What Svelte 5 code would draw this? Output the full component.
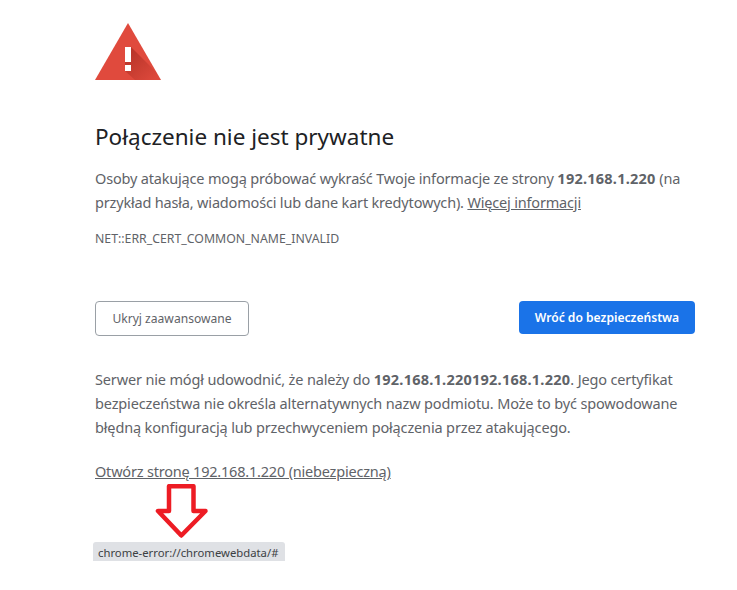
<script>
  const ip = '192.168.1.220';
</script>

<div class="page">
  <main class="interstitial">
    <svg class="warn" width="66" height="57" viewBox="0 0 66 57" aria-hidden="true">
      <defs>
        <linearGradient id="shade" x1="0.1" y1="0.1" x2="0.9" y2="0.9">
          <stop offset="0" stop-color="#a52a20" stop-opacity="0.7" />
          <stop offset="1" stop-color="#a52a20" stop-opacity="0.05" />
        </linearGradient>
      </defs>
      <path d="M33 0 L66 57 L0 57 Z" fill="#e04a3d" />
      <path d="M36 24 L62 50 L66 57 L40 57 L30 48 L30 39 Z" fill="url(#shade)" />
      <rect x="30" y="24" width="6" height="15" fill="#fff" />
      <rect x="30" y="42" width="6" height="6" fill="#fff" />
    </svg>

    <h1>Połączenie nie jest prywatne</h1>
    <p class="msg">
      Osoby atakujące mogą próbować wykraść Twoje informacje ze strony <strong>{ip}</strong> (na
      przykład hasła, wiadomości lub dane kart kredytowych). <a href="#more">Więcej informacji</a>
    </p>
    <div class="code">NET::ERR_CERT_COMMON_NAME_INVALID</div>

    <div class="actions">
      <button class="secondary">Ukryj zaawansowane</button>
      <button class="primary">Wróć do bezpieczeństwa</button>
    </div>

    <p class="details">
      Serwer nie mógł udowodnić, że należy do <strong>{ip}{ip}</strong>. Jego certyfikat
      bezpieczeństwa nie określa alternatywnych nazw podmiotu. Może to być spowodowane
      błędną konfiguracją lub przechwyceniem połączenia przez atakującego.
    </p>
    <a class="proceed" href="#go">Otwórz stronę {ip} (niebezpieczną)</a>
  </main>

  <svg class="arrow" width="54" height="56" viewBox="0 0 54 56" aria-hidden="true">
    <path d="M15 2.2 H39.5 V27 H51.5 L27.3 51.5 L4 27 H15 Z" fill="#fff" stroke="#ed1c24" stroke-width="4.5" stroke-linejoin="round" />
  </svg>
  <div class="status">chrome-error://chromewebdata/#</div>
</div>

<style>
  :global(body) {
    margin: 0;
    background: #fff;
  }
  .page {
    position: relative;
    width: 737px;
    height: 590px;
    overflow: hidden;
    font-family: "Noto Sans", "Open Sans", sans-serif;
    color: #5f6368;
  }
  .interstitial {
    width: 600px;
    padding: 23px 0 0 95px;
  }
  .warn {
    display: block;
  }
  h1 {
    margin: 41px 0 0;
    font-size: 22.5px;
    font-weight: 400;
    line-height: 32px;
    color: #202124;
  }
  .msg {
    margin: 13px 0 0;
    font-size: 14.5px;
    letter-spacing: -0.18px;
    line-height: 24px;
  }
  .msg strong,
  .details strong {
    font-weight: 700;
    letter-spacing: 0.24px;
  }
  a {
    color: #5f6368;
    text-decoration: underline;
  }
  .code {
    margin-top: 17px;
    font-size: 12.3px;
    line-height: 16px;
    text-transform: uppercase;
  }
  .actions {
    display: flex;
    justify-content: space-between;
    align-items: flex-start;
    margin-top: 54px;
  }
  button {
    border-radius: 4px;
    font-family: inherit;
    font-size: 12.1px;
    cursor: pointer;
  }
  .secondary {
    width: 154px;
    height: 35px;
    background: #fff;
    border: 1px solid #9aa0a6;
    color: #5f6368;
  }
  .primary {
    width: 176px;
    height: 33px;
    background: #1a73e8;
    border: none;
    color: #fff;
    font-weight: 600;
  }
  .details {
    margin: 31px 0 0;
    font-size: 14.5px;
    letter-spacing: -0.15px;
    line-height: 24px;
  }
  .proceed {
    display: inline-block;
    margin-top: 20px;
    font-size: 14.5px;
    letter-spacing: -0.2px;
    line-height: 24px;
  }
  .arrow {
    position: absolute;
    left: 154px;
    top: 484px;
  }
  .status {
    position: absolute;
    left: 93px;
    top: 542px;
    width: 187px;
    height: 19px;
    padding-left: 5px;
    background: #dfe1e5;
    border-radius: 3px 3px 0 0;
    font-size: 11.3px;
    line-height: 21px;
    color: #3c4043;
    white-space: nowrap;
  }
</style>
